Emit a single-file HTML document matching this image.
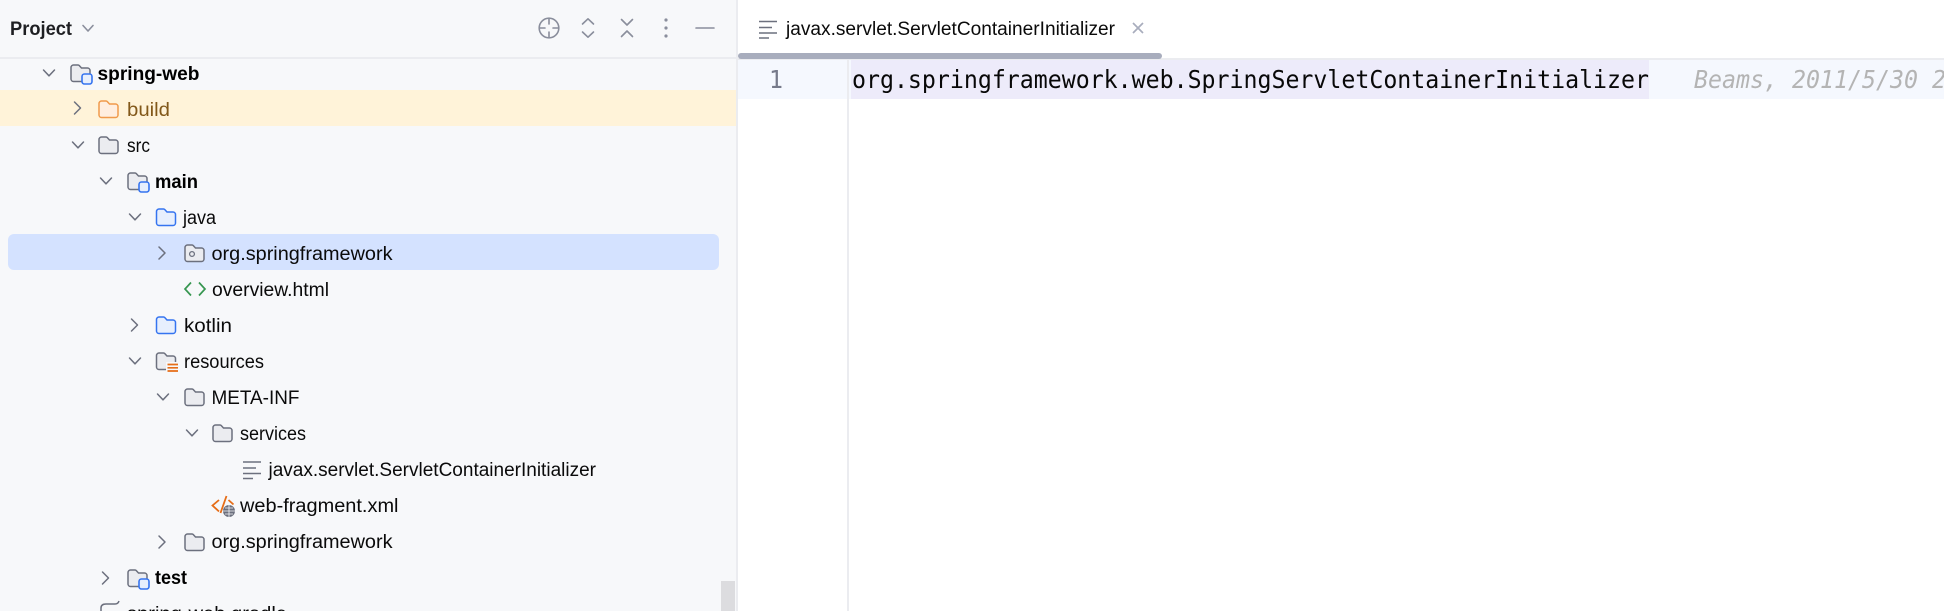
<!DOCTYPE html>
<html>
<head>
<meta charset="utf-8">
<style>
html,body{margin:0;padding:0;width:1944px;height:611px;overflow:hidden;background:#fff}
svg{display:block}
.t{font-family:"Liberation Sans","DejaVu Sans",sans-serif;font-size:19px;fill:#0a0a0a}
.b{font-weight:700;fill:#000}
.c{fill:none;stroke:#6c707e;stroke-width:1.5;stroke-linecap:round;stroke-linejoin:round}
.i{fill:none;stroke:#8a8e9c;stroke-width:1.6;stroke-linecap:round;stroke-linejoin:round}
.m{font-family:"DejaVu Sans Mono","Liberation Mono",monospace;font-size:25px}
</style>
</head>
<body>
<svg width="1944" height="611" viewBox="0 0 1944 611" xmlns="http://www.w3.org/2000/svg">
<defs>
<path id="fp" d="M1 3.5a2.5 2.5 0 0 1 2.5-2.5h4.6a1.5 1.5 0 0 1 1.1.5l2.3 2.5h6a2.5 2.5 0 0 1 2.5 2.5v8.5a2.5 2.5 0 0 1-2.5 2.5h-14a2.5 2.5 0 0 1-2.5-2.5z"/>
<g id="fg"><use href="#fp" fill="#ebecf0" stroke="#6c707e" stroke-width="1.5"/></g>
<g id="fb"><use href="#fp" fill="#e7effd" stroke="#3574f0" stroke-width="1.5"/></g>
<g id="fo"><use href="#fp" fill="#ffeedf" stroke="#f09a4c" stroke-width="1.5"/></g>
<g id="fm"><use href="#fp" fill="#ebecf0" stroke="#6c707e" stroke-width="1.5"/><rect x="12" y="10" width="10" height="10" rx="2.5" fill="#e7effd" stroke="#3574f0" stroke-width="1.6"/></g>
<path id="cd" class="c" d="M-5.5-3L0 2.8 5.5-3"/>
<path id="cr" class="c" d="M-3-6L3 0-3 6"/>
<g id="doc" fill="none" stroke="#6c707e" stroke-width="1.6"><path d="M0 1H18M0 7H13M0 12.500H18M0 17.500H10"/></g>
</defs>

<!-- panels -->
<rect x="0" y="0" width="736" height="611" fill="#f7f8fa"/>
<rect x="0" y="57" width="736" height="2" fill="#ebecf0"/>
<rect x="736" y="0" width="2" height="611" fill="#ebecf0"/>
<rect x="0" y="90" width="736" height="36" fill="#fff3d9"/>
<rect x="8" y="234" width="711" height="36" rx="6" fill="#d4e2ff"/>
<rect x="721" y="581" width="14" height="30" fill="#dcdcdf"/>

<!-- header -->
<text class="t b" x="10" y="35" textLength="62" lengthAdjust="spacingAndGlyphs" style="fill:#1e1f22">Project</text>
<path class="i" d="M83 25.500L88 31 93 25.500"/>
<g class="i">
<circle cx="549" cy="28" r="9.800"/>
<path d="M549 18.500V24M549 32V37.500M539.500 28H545M553 28H558.500"/>
<path d="M582.500 24L588 18.800 593.500 24M582.500 32L588 37.200 593.500 32"/>
<path d="M621.500 19.500L627 25 632.500 19.500M621.500 36.500L627 31 632.500 36.500"/>
<path d="M696 28H714"/>
</g>
<circle cx="666" cy="20" r="1.600" fill="#8a8e9c"/><circle cx="666" cy="28" r="1.600" fill="#8a8e9c"/><circle cx="666" cy="36" r="1.600" fill="#8a8e9c"/>

<!-- tree -->
<use href="#cd" x="49" y="73"/><use href="#fm" x="70" y="64"/>
<text class="t b" x="97.500" y="80" textLength="102" lengthAdjust="spacingAndGlyphs">spring-web</text>

<use href="#cr" x="77.500" y="108"/><use href="#fo" x="98" y="100"/>
<text class="t" x="127" y="116" textLength="43" lengthAdjust="spacingAndGlyphs" style="fill:#82581a">build</text>

<use href="#cd" x="78" y="145"/><use href="#fg" x="98" y="136"/>
<text class="t" x="127" y="152" textLength="23" lengthAdjust="spacingAndGlyphs">src</text>

<use href="#cd" x="106" y="181"/><use href="#fm" x="127" y="172"/>
<text class="t b" x="155" y="188" textLength="43" lengthAdjust="spacingAndGlyphs">main</text>

<use href="#cd" x="135" y="217"/><use href="#fb" x="155.500" y="208"/>
<text class="t" x="183" y="224" textLength="33" lengthAdjust="spacingAndGlyphs">java</text>

<use href="#cr" x="162" y="253"/><use href="#fg" x="184" y="244"/>
<circle cx="192" cy="254" r="2.400" fill="none" stroke="#6c707e" stroke-width="1.300"/>
<text class="t" x="211.500" y="260" textLength="181" lengthAdjust="spacingAndGlyphs">org.springframework</text>

<path d="M191 282.500L185 289 191 295.500M199 282.500L205 289 199 295.500" fill="none" stroke="#369650" stroke-width="1.700"/>
<text class="t" x="212" y="296" textLength="117" lengthAdjust="spacingAndGlyphs">overview.html</text>

<use href="#cr" x="134.500" y="325"/><use href="#fb" x="155.500" y="316"/>
<text class="t" x="184" y="332" textLength="48" lengthAdjust="spacingAndGlyphs">kotlin</text>

<use href="#cd" x="135" y="361"/><use href="#fg" x="155.500" y="352"/>
<rect x="166" y="362" width="13" height="10" fill="#f7f8fa"/>
<path d="M167.500 364.500H178M167.500 367.800H178M167.500 371H178" fill="none" stroke="#e66d17" stroke-width="1.700"/>
<text class="t" x="184" y="368" textLength="80" lengthAdjust="spacingAndGlyphs">resources</text>

<use href="#cd" x="163" y="397"/><use href="#fg" x="184" y="388"/>
<text class="t" x="211.500" y="404" textLength="88" lengthAdjust="spacingAndGlyphs">META-INF</text>

<use href="#cd" x="192" y="433"/><use href="#fg" x="212" y="424"/>
<text class="t" x="240" y="440" textLength="66" lengthAdjust="spacingAndGlyphs">services</text>

<use href="#doc" x="243" y="461"/>
<text class="t" x="268.500" y="476" textLength="327.500" lengthAdjust="spacingAndGlyphs">javax.servlet.ServletContainerInitializer</text>

<path d="M219 500L212.500 505.500 219 511.500M220.500 513L226.500 496M228.500 500L233.500 504.500" fill="none" stroke="#e66d17" stroke-width="1.800"/>
<circle cx="229" cy="511" r="6" fill="#6c707e"/>
<path d="M223 511H235M229 505V517M225 508H233M225 514H233" stroke="#f7f8fa" stroke-width=".8" fill="none"/>
<text class="t" x="240" y="512" textLength="158.500" lengthAdjust="spacingAndGlyphs">web-fragment.xml</text>

<use href="#cr" x="162" y="542"/><use href="#fg" x="184" y="533"/>
<text class="t" x="211.500" y="548" textLength="181" lengthAdjust="spacingAndGlyphs">org.springframework</text>

<use href="#cr" x="105.500" y="578"/><use href="#fm" x="127" y="569"/>
<text class="t b" x="155" y="584" textLength="32" lengthAdjust="spacingAndGlyphs">test</text>

<path d="M101 611V608q0-4 5-4h9q3 0 4-3" fill="none" stroke="#6c707e" stroke-width="1.500"/>
<text class="t" x="127" y="620" textLength="160" lengthAdjust="spacingAndGlyphs">spring-web.gradle</text>

<!-- editor -->
<rect x="738" y="60" width="1206" height="39" fill="#f5f8fe"/>
<rect x="738" y="58" width="1206" height="2" fill="#ebecf0"/>
<rect x="851" y="60" width="798" height="39" fill="#edebfa"/>
<rect x="847" y="60" width="2" height="551" fill="#ebecf0"/>
<rect x="738" y="53" width="424" height="6" rx="3" fill="#a8adbd"/>

<use href="#doc" x="759" y="20.500"/>
<text class="t" x="786" y="35" textLength="329" lengthAdjust="spacingAndGlyphs">javax.servlet.ServletContainerInitializer</text>
<path d="M1133 23L1143 33M1143 23L1133 33" stroke="#a8adbd" stroke-width="1.700" fill="none"/>

<text class="m" x="769" y="88" textLength="14" lengthAdjust="spacingAndGlyphs" style="fill:#767a8a">1</text>
<text class="m" x="852" y="88" textLength="797" lengthAdjust="spacingAndGlyphs" style="fill:#080808">org.springframework.web.SpringServletContainerInitializer</text>
<text class="m" x="1694" y="88" textLength="252" lengthAdjust="spacingAndGlyphs" style="fill:#b4b4b4;font-style:italic">Beams, 2011/5/30 2</text>
</svg>
</body>
</html>
